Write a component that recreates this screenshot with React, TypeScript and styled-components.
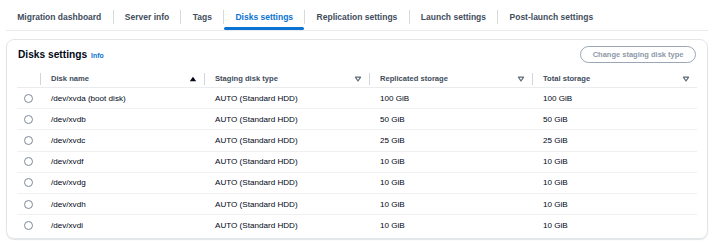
import styled, { createGlobalStyle } from "styled-components";

interface TabProps {
  $active?: boolean;
}

interface CellProps {
  $last?: boolean;
}

interface DiskRow {
  name: string;
  staging: string;
  replicated: string;
  total: string;
}

const tabs = [
  "Migration dashboard",
  "Server info",
  "Tags",
  "Disks settings",
  "Replication settings",
  "Launch settings",
  "Post-launch settings",
];

const columns = ["Disk name", "Staging disk type", "Replicated storage", "Total storage"];

const disks: DiskRow[] = [
  { name: "/dev/xvda (boot disk)", staging: "AUTO (Standard HDD)", replicated: "100 GiB", total: "100 GiB" },
  { name: "/dev/xvdb", staging: "AUTO (Standard HDD)", replicated: "50 GiB", total: "50 GiB" },
  { name: "/dev/xvdc", staging: "AUTO (Standard HDD)", replicated: "25 GiB", total: "25 GiB" },
  { name: "/dev/xvdf", staging: "AUTO (Standard HDD)", replicated: "10 GiB", total: "10 GiB" },
  { name: "/dev/xvdg", staging: "AUTO (Standard HDD)", replicated: "10 GiB", total: "10 GiB" },
  { name: "/dev/xvdh", staging: "AUTO (Standard HDD)", replicated: "10 GiB", total: "10 GiB" },
  { name: "/dev/xvdi", staging: "AUTO (Standard HDD)", replicated: "10 GiB", total: "10 GiB" },
];

const GlobalStyle = createGlobalStyle`
  body {
    margin: 0;
    background: #ffffff;
    font-family: "Liberation Sans", Arial, sans-serif;
    color: #000716;
  }
`;

const Page = styled.div`
  width: 720px;
  height: 252px;
  padding: 0 12px 0 6px;
  box-sizing: border-box;
`;

const TabBar = styled.div`
  display: flex;
  height: 30px;
  border-bottom: 1px solid #e9ebed;
`;

const TabGroup = styled.div`
  display: flex;
`;

const Tab = styled.div<TabProps>`
  display: flex;
  flex-direction: column;
  padding: 10px 11.25px 0;
  font-size: 8.5px;
  font-weight: 700;
  color: ${({ $active }) => ($active ? "#0972d3" : "#414d5c")};
`;

const TabLabel = styled.span`
  height: 14px;
  line-height: 14px;
  white-space: nowrap;
`;

const TabIndicator = styled.div<TabProps>`
  margin: 2.5px -11.25px 0;
  height: 3px;
  border-radius: 2px;
  background: ${({ $active }) => ($active ? "#0972d3" : "transparent")};
`;

const TabDivider = styled.div`
  width: 1px;
  height: 14px;
  margin-top: 10px;
  background: #d5dbdb;
`;

const Card = styled.div`
  margin-top: 8px;
  border: 1px solid #e3e6e9;
  border-radius: 8px;
  box-shadow: 0 1px 1px rgba(0, 28, 36, 0.12);
  padding: 6px 10px 2px;
`;

const CardHeader = styled.div`
  display: flex;
  align-items: center;
  justify-content: space-between;
  height: 17px;
  padding-left: 1px;
`;

const Title = styled.h2`
  margin: 0;
  font-size: 10.2px;
  font-weight: 700;
  color: #000716;
  display: flex;
  align-items: baseline;
  gap: 4px;
`;

const InfoLink = styled.span`
  font-size: 6.9px;
  font-weight: 700;
  color: #0972d3;
`;

const DisabledButton = styled.button`
  height: 17px;
  padding: 0 11.5px;
  border: 1.3px solid #9ba7b6;
  border-radius: 9px;
  background: #ffffff;
  color: #8d99a8;
  font-family: inherit;
  font-size: 7.5px;
  font-weight: 700;
  margin-right: 1px;
`;

const Table = styled.div`
  margin-top: 7px;
  display: grid;
  grid-template-columns: 23px 164px 165px 163px 165px;
`;

const HeaderCell = styled.div`
  height: 17px;
  display: flex;
  align-items: center;
  border-bottom: 1px solid #e9ebed;
  font-size: 7.6px;
  font-weight: 700;
  color: #414d5c;
`;

const HeaderDivider = styled.div`
  width: 1px;
  height: 12px;
  background: #d1d5db;
`;

const HeaderLabel = styled.span`
  flex: 1;
  padding-left: 10px;
`;

const SortIcon = styled.svg`
  width: 8px;
  height: 8px;
  margin-right: 7px;
`;

const Cell = styled.div<CellProps>`
  height: 20.2px;
  display: flex;
  align-items: center;
  border-bottom: 1px solid ${({ $last }) => ($last ? "transparent" : "#eef0f2")};
  font-size: 8.1px;
  padding-left: 11px;
  white-space: nowrap;
`;

const RadioCell = styled(Cell)`
  padding-left: 0;
  justify-content: center;
`;

const Radio = styled.span`
  width: 7px;
  height: 7px;
  border: 1.4px solid #7d8998;
  border-radius: 50%;
`;

function SortAsc() {
  return (
    <SortIcon viewBox="0 0 8 8">
      <path d="M0.8 6.2 L4 1.8 L7.2 6.2 Z" fill="#000716" />
    </SortIcon>
  );
}

function SortNone() {
  return (
    <SortIcon viewBox="0 0 8 8">
      <path d="M1.4 2.2 H6.6 L4 6 Z" fill="none" stroke="#5f6b7a" strokeWidth="1.2" strokeLinejoin="round" />
    </SortIcon>
  );
}

function App() {
  return (
    <Page>
      <GlobalStyle />
      <TabBar>
        {tabs.map((label, i) => (
          <TabGroup key={label}>
            {i > 0 && <TabDivider />}
            <Tab $active={label === "Disks settings"}>
              <TabLabel>{label}</TabLabel>
              <TabIndicator $active={label === "Disks settings"} />
            </Tab>
          </TabGroup>
        ))}
      </TabBar>

      <Card>
        <CardHeader>
          <Title>
            Disks settings <InfoLink>Info</InfoLink>
          </Title>
          <DisabledButton disabled>Change staging disk type</DisabledButton>
        </CardHeader>

        <Table>
          <HeaderCell />
          {columns.map((col, i) => (
            <HeaderCell key={col}>
              <HeaderDivider />
              <HeaderLabel>{col}</HeaderLabel>
              {i === 0 ? <SortAsc /> : <SortNone />}
            </HeaderCell>
          ))}

          {disks.map((d, i) => {
            const last = i === disks.length - 1;
            return [
              <RadioCell key={d.name + "-r"} $last={last}>
                <Radio />
              </RadioCell>,
              <Cell key={d.name + "-n"} $last={last}>{d.name}</Cell>,
              <Cell key={d.name + "-s"} $last={last}>{d.staging}</Cell>,
              <Cell key={d.name + "-p"} $last={last}>{d.replicated}</Cell>,
              <Cell key={d.name + "-t"} $last={last}>{d.total}</Cell>,
            ];
          })}
        </Table>
      </Card>
    </Page>
  );
}

export default App;
